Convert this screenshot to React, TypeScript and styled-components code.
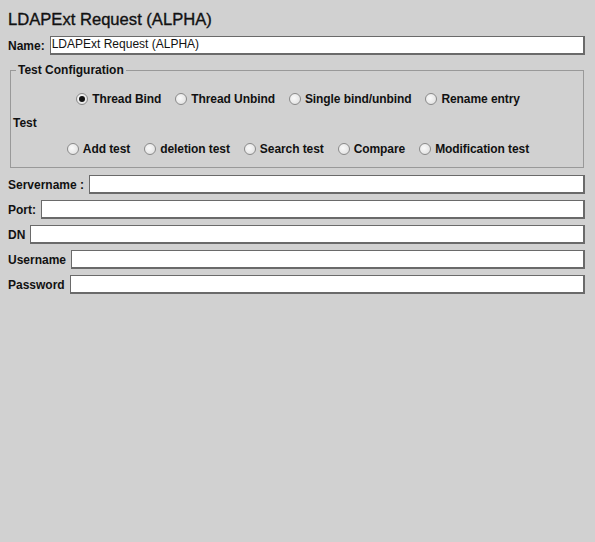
import React from "react";
import styled, { createGlobalStyle } from "styled-components";

const Global = createGlobalStyle`
  html, body { margin: 0; padding: 0; background: #d1d1d1; }
  body { font-family: "Liberation Sans", Arial, sans-serif; color: #000; }
  #root { min-height: 542px; background: #d1d1d1; }
`;

const Page = styled.div`
  display: flex;
  flex-direction: column;
  padding: 10px 10px 0 8px;
`;

const Title = styled.h1`
  margin: 0 0 6px 0;
  font-size: 16.6px;
  font-weight: normal;
  line-height: 20px;
  color: #111;
  -webkit-text-stroke: 0.35px #111;
`;

const Row = styled.div`
  display: flex;
  align-items: center;
  gap: 5px;
  height: 19px;
  margin-bottom: 6px;
`;

const Label = styled.label`
  font-size: 12px;
  font-weight: bold;
  white-space: nowrap;
  color: #111;
`;

const Field = styled.div`
  flex: 1;
  height: 19px;
  box-sizing: border-box;
  background: #fff;
  border-top: 1px solid #6a6a6a;
  border-left: 1px solid #6a6a6a;
  border-right: 2px solid #6a6a6a;
  border-bottom: 2px solid #6a6a6a;
  font-size: 12px;
  line-height: 15px;
  padding-left: 1px;
  color: #111;
`;

const Group = styled.fieldset`
  margin: 2px 1px 7px 2px;
  padding: 9px 0 6px 2px;
  border: 1px solid #999;
  display: flex;
  flex-direction: column;
`;

const Legend = styled.legend`
  font-size: 12px;
  font-weight: bold;
  padding: 0 2px;
  margin-left: 3px;
  color: #111;
`;

const RadioRow = styled.div`
  display: flex;
  justify-content: center;
  gap: 14px;
  height: 25px;
  align-items: center;
`;

const SideLabel = styled.div`
  font-size: 12px;
  font-weight: bold;
  height: 25px;
  line-height: 25px;
  color: #111;
`;

const RadioItem = styled.div`
  display: flex;
  align-items: center;
  gap: 4px;
  font-size: 12px;
  font-weight: bold;
  letter-spacing: -0.08px;
  color: #111;
`;

const Circle = styled.span<{ $on?: boolean }>`
  width: 12px;
  height: 12px;
  box-sizing: border-box;
  border-radius: 50%;
  border: 1px solid #8a8a8a;
  background: radial-gradient(circle at 40% 40%, #fafafa 0%, #e8e8e8 60%, #d8d8d8 100%);
  display: flex;
  align-items: center;
  justify-content: center;
  &::after {
    content: "";
    display: ${(p) => (p.$on ? "block" : "none")};
    width: 6px;
    height: 6px;
    border-radius: 50%;
    background: #111;
  }
`;

const Radio = ({ label, on }: { label: string; on?: boolean }) => (
  <RadioItem>
    <Circle $on={on} />
    <span>{label}</span>
  </RadioItem>
);

export default function App() {
  return (
    <>
      <Global />
      <Page>
        <Title>LDAPExt Request (ALPHA)</Title>
        <Row>
          <Label>Name:</Label>
          <Field>LDAPExt Request (ALPHA)</Field>
        </Row>
        <Group>
          <Legend>Test Configuration</Legend>
          <RadioRow>
            <Radio label="Thread Bind" on />
            <Radio label="Thread Unbind" />
            <Radio label="Single bind/unbind" />
            <Radio label="Rename entry" />
          </RadioRow>
          <SideLabel>Test</SideLabel>
          <RadioRow>
            <Radio label="Add test" />
            <Radio label="deletion test" />
            <Radio label="Search test" />
            <Radio label="Compare" />
            <Radio label="Modification test" />
          </RadioRow>
        </Group>
        <Row>
          <Label>Servername :</Label>
          <Field />
        </Row>
        <Row>
          <Label>Port:</Label>
          <Field />
        </Row>
        <Row>
          <Label>DN</Label>
          <Field />
        </Row>
        <Row>
          <Label>Username</Label>
          <Field />
        </Row>
        <Row>
          <Label>Password</Label>
          <Field />
        </Row>
      </Page>
    </>
  );
}
